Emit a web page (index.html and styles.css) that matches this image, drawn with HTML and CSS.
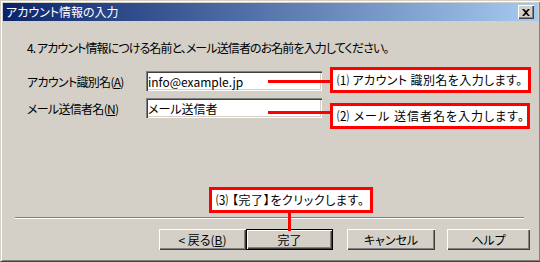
FILE: index.html
```html
<!DOCTYPE html>
<html lang="ja">
<head>
    <meta charset="UTF-8">
    <meta name="viewport" content="width=device-width, initial-scale=1.0">
    <title>アカウント情報の入力</title>
    <link rel="stylesheet" href="styles.css">
</head>
<body>

<div class="window">
    <div class="titlebar">
        <span class="title-text">アカウント情報の入力</span>
        <span class="close-btn">
            <svg width="8" height="7" viewBox="0 0 8 7"><path d="M0 0h2l2 2 2-2h2L5 3.5 8 7H6L4 5 2 7H0l3-3.5z" fill="#000"/></svg>
        </span>
    </div>

    <div class="content">
        <p class="instruction">4. アカウント情報につける名前と、メール送信者のお名前を入力してください。</p>

        <div class="form-row">
            <label class="field-label" for="account">アカウント識別名(<u>A</u>)</label>
            <input class="field-input" type="text" id="account" value="info@example.jp">
        </div>
        <div class="form-row">
            <label class="field-label" for="sender">メール送信者名(<u>N</u>)</label>
            <input class="field-input" type="text" id="sender" value="メール送信者">
        </div>
    </div>

    <div class="footer">
        <div class="separator"></div>
        <div class="button-row">
            <button type="button" class="btn btn-back">&lt; 戻る(<u>B</u>)</button>
            <button type="button" class="btn btn-default">完了</button>
            <button type="button" class="btn btn-cancel">キャンセル</button>
            <button type="button" class="btn btn-help">ヘルプ</button>
        </div>
    </div>

    <!-- annotations drawn over the dialog -->
    <div class="leader leader-1"></div>
    <div class="leader leader-2"></div>
    <div class="leader leader-3"></div>
    <div class="callout callout-1">⑴ アカウント 識別名を入力します。</div>
    <div class="callout callout-2">⑵ メール 送信者名を入力します。</div>
    <div class="callout callout-3">⑶ 【完了】をクリックします。</div>
</div>

</body>
</html>
```

FILE: styles.css
```css
body {
    margin: 0;
    padding: 0;
    background-color: #d4d0c8;
    font-family: "Noto Sans CJK JP", "Liberation Sans", sans-serif;
    font-size: 12px;
    font-feature-settings: "palt";
    color: #000;
}

.window {
    position: relative;
    width: 540px;
    height: 262px;
    box-sizing: border-box;
    background-color: #d4d0c8;
    border-left: 1px solid #d4d0c8;
    border-top: 1px solid #d4d0c8;
    border-bottom: 1px solid #404040;
    box-shadow: inset 1px 1px #fff, inset -1px -1px #808080;
    display: flex;
    flex-direction: column;
}

.titlebar {
    height: 18px;
    margin: 2px 2px 0 2px;
    background: linear-gradient(to right, #0a246a, #a6caf0);
    color: #fff;
    display: flex;
    align-items: center;
    justify-content: space-between;
    padding: 0 4px 0 3px;
}

.title-text {
    line-height: 18px;
}

.close-btn {
    width: 16px;
    height: 14px;
    box-sizing: border-box;
    background-color: #d4d0c8;
    box-shadow: inset 1px 1px #fff, inset -1px -1px #404040, inset -2px -2px #808080;
    display: flex;
    align-items: center;
    justify-content: center;
}

.content {
    padding-left: 26px;
}

.instruction {
    margin: 20px 0 0 0;
    line-height: 14px;
    letter-spacing: -0.9px;
}

.form-row {
    display: flex;
    align-items: center;
    height: 20px;
    margin-top: 7px;
}

.instruction + .form-row {
    margin-top: 16px;
}

.field-label {
    width: 119px;
    letter-spacing: -0.7px;
}

.field-input {
    width: 176px;
    height: 20px;
    box-sizing: border-box;
    margin: 0;
    padding: 1px 2px 0 2px;
    border: none;
    background-color: #fff;
    box-shadow: inset 1px 1px #808080, inset 2px 2px #404040, inset -1px -1px #fff, inset -2px -2px #d4d0c8;
    font-family: inherit;
    font-size: 12px;
    font-feature-settings: "palt";
    outline: none;
}

.footer {
    margin-top: auto;
    padding-bottom: 11px;
}

.separator {
    margin-left: 14px;
    width: 509px;
    border-top: 1px solid #808080;
    border-bottom: 1px solid #fff;
}

.button-row {
    display: flex;
    margin-top: 10px;
    padding-left: 158px;
}

.btn {
    height: 21px;
    width: 87px;
    margin: 0;
    padding: 0;
    border: none;
    background-color: #d4d0c8;
    box-shadow: inset 1px 1px #fff, inset -1px -1px #404040, inset -2px -2px #808080;
    font-family: inherit;
    font-size: 12px;
    font-feature-settings: "palt";
    color: #000;
}

.btn-default {
    box-shadow: inset 0 0 0 1px #000, inset 2px 2px #fff, inset -2px -2px #404040, inset -3px -3px #808080;
}

.btn-cancel {
    margin-left: 14px;
    width: 88px;
}

.btn-help {
    margin-left: 12px;
    width: 83px;
}

/* annotations */
.callout {
    position: absolute;
    height: 26px;
    box-sizing: border-box;
    border: 3px solid #f00;
    background-color: #fff;
    line-height: 20px;
    padding-left: 4px;
    white-space: nowrap;
    letter-spacing: 0.4px;
}

.callout-1 {
    left: 329px;
    top: 66px;
    width: 201px;
}

.callout-2 {
    left: 329px;
    top: 102px;
    width: 200px;
    letter-spacing: 1px;
}

.callout-3 {
    left: 208px;
    top: 186px;
    width: 164px;
    letter-spacing: 0.6px;
}

.leader {
    position: absolute;
    background-color: #f00;
}

.leader-1 {
    left: 267px;
    top: 79px;
    width: 64px;
    height: 3px;
}

.leader-2 {
    left: 267px;
    top: 110px;
    width: 64px;
    height: 3px;
}

.leader-3 {
    left: 287px;
    top: 210px;
    width: 3px;
    height: 20px;
}
```
